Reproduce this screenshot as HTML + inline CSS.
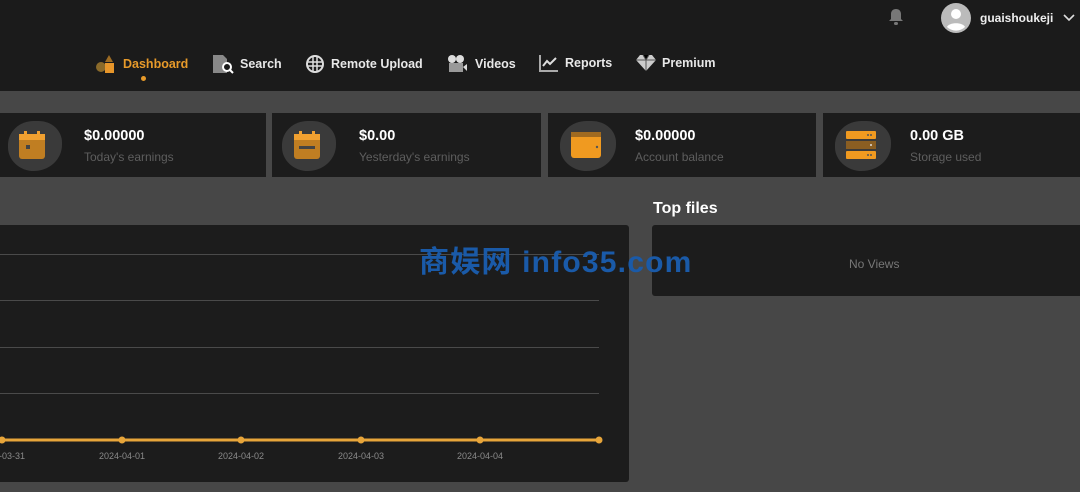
<!DOCTYPE html>
<html><head><meta charset="utf-8"><style>
*{margin:0;padding:0;box-sizing:border-box}
body{width:1080px;height:492px;overflow:hidden;background:#474747;font-family:"Liberation Sans","Noto Sans CJK SC",sans-serif;position:relative}
.hdr{position:absolute;left:0;top:0;width:1080px;height:91px;background:#1b1b1b}
.nav{position:absolute;top:54px;font-size:12.5px;font-weight:bold;color:#e8e8e8;display:flex;align-items:center;gap:6px}
.card{position:absolute;top:113px;height:64px;background:#1c1c1c}
.blob{position:absolute;left:8px;top:8px;width:54px;height:50px;background:#3a3a3a;border-radius:50% 45% 55% 50%}
.val{position:absolute;top:15px;color:#fff;font-weight:bold;font-size:14.5px}
.lbl{position:absolute;top:37px;color:#5e5e5e;font-size:12px}
.ic{position:absolute}
</style></head><body>
<div class="hdr"></div>
<svg class="ic" style="left:886px;top:7px" width="20" height="20" viewBox="0 0 20 20"><path d="M10 2c-3 0-5 2-5 5v5l-2 2h14l-2-2V7c0-3-2-5-5-5z" fill="#777"/><rect x="8" y="15" width="4" height="3" rx="1.5" fill="#777"/></svg>
<svg class="ic" style="left:941px;top:3px" width="30" height="30" viewBox="0 0 30 30"><circle cx="15" cy="15" r="15" fill="#bbb"/><circle cx="15" cy="11" r="5" fill="#fff"/><path d="M6 24c2-5 16-5 18 0a13 13 0 0 1-18 0z" fill="#fff"/></svg>
<div style="position:absolute;left:980px;top:11px;color:#eee;font-size:12px;font-weight:bold">guaishoukeji</div>
<svg class="ic" style="left:1063px;top:14px" width="12" height="8" viewBox="0 0 12 8"><path d="M1 1l5 5 5-5" stroke="#ddd" stroke-width="1.6" fill="none"/></svg>

<div class="nav" style="left:96px;color:#e79a2a"><svg width="21" height="20" viewBox="0 0 21 20"><circle cx="5" cy="13" r="5" fill="#8a6a2a"/><path d="M13 1l4 7h-8z" fill="#9c6b23"/><rect x="9" y="9" width="9" height="10" fill="#e7962a"/></svg>Dashboard</div>
<div style="position:absolute;left:141px;top:76px;width:5px;height:5px;border-radius:50%;background:#e79a2a"></div>
<div class="nav" style="left:212px"><svg width="22" height="20" viewBox="0 0 22 20"><path d="M1 1h10l4 4v14H1z" fill="#888"/><circle cx="15" cy="13" r="4" fill="#1b1b1b" stroke="#fff" stroke-width="2"/><path d="M18 16l3 3" stroke="#fff" stroke-width="2"/></svg>Search</div>
<div class="nav" style="left:305px"><svg width="20" height="20" viewBox="0 0 20 20"><circle cx="10" cy="10" r="8" fill="none" stroke="#ddd" stroke-width="2"/><path d="M2 8h16M2 12h16M8 2v16M12 2v16" stroke="#ddd" stroke-width="1.5"/></svg>Remote Upload</div>
<div class="nav" style="left:447px"><svg width="22" height="20" viewBox="0 0 22 20"><circle cx="5" cy="5" r="4" fill="#ddd"/><circle cx="13" cy="5" r="4" fill="#ddd"/><rect x="2" y="9" width="14" height="9" fill="#999"/><path d="M16 13l4-3v7z" fill="#ddd"/></svg>Videos</div>
<div class="nav" style="left:539px"><svg width="20" height="18" viewBox="0 0 20 18"><path d="M1 1v16h18" stroke="#aaa" stroke-width="2" fill="none"/><path d="M4 12l4-5 3 3 6-6" stroke="#ddd" stroke-width="2" fill="none"/></svg>Reports</div>
<div class="nav" style="left:636px"><svg width="20" height="18" viewBox="0 0 20 18"><path d="M4 1h12l4 5-10 11L0 6z" fill="#ccc"/><path d="M0 6h20M7 1l3 5 3-5M10 6v11" stroke="#555" stroke-width="1"/></svg>Premium</div>

<div class="card" style="left:0;width:266px"><div class="blob"></div>
<svg class="ic" style="left:18px;top:17px" width="28" height="30" viewBox="0 0 28 30"><rect x="1" y="4" width="26" height="25" rx="3" fill="#c07e22"/><rect x="1" y="4" width="26" height="6" fill="#f0a030"/><rect x="6" y="1" width="3" height="6" fill="#f0a030"/><rect x="19" y="1" width="3" height="6" fill="#f0a030"/><rect x="8" y="15" width="4" height="4" fill="#444"/></svg>
<div class="val" style="left:84px">$0.00000</div><div class="lbl" style="left:84px">Today's earnings</div></div>
<div class="card" style="left:272px;width:269px"><div class="blob" style="left:10px"></div>
<svg class="ic" style="left:21px;top:17px" width="28" height="30" viewBox="0 0 28 30"><rect x="1" y="4" width="26" height="25" rx="3" fill="#c07e22"/><rect x="1" y="4" width="26" height="6" fill="#f0a030"/><rect x="6" y="1" width="3" height="6" fill="#f0a030"/><rect x="19" y="1" width="3" height="6" fill="#f0a030"/><rect x="6" y="16" width="16" height="3" fill="#444"/></svg>
<div class="val" style="left:87px">$0.00</div><div class="lbl" style="left:87px">Yesterday's earnings</div></div>
<div class="card" style="left:548px;width:268px"><div class="blob" style="left:12px;width:56px"></div>
<svg class="ic" style="left:22px;top:18px" width="32" height="28" viewBox="0 0 32 28"><rect x="1" y="1" width="30" height="26" rx="3" fill="#f09a20"/><rect x="1" y="1" width="30" height="5" fill="#a06a20"/><circle cx="27" cy="16" r="1.2" fill="#555"/></svg>
<div class="val" style="left:87px">$0.00000</div><div class="lbl" style="left:87px">Account balance</div></div>
<div class="card" style="left:823px;width:257px"><div class="blob" style="left:12px;width:56px"></div>
<svg class="ic" style="left:22px;top:17px" width="32" height="30" viewBox="0 0 32 30"><rect x="1" y="1" width="30" height="8" rx="1" fill="#f09a20"/><rect x="1" y="11" width="30" height="8" fill="#8a5e22"/><rect x="1" y="21" width="30" height="8" rx="1" fill="#f09a20"/><circle cx="23" cy="5" r="1" fill="#555"/><circle cx="26" cy="5" r="1" fill="#555"/><circle cx="26" cy="15" r="1" fill="#ddd"/><circle cx="23" cy="25" r="1" fill="#555"/><circle cx="26" cy="25" r="1" fill="#555"/></svg>
<div class="val" style="left:87px">0.00 GB</div><div class="lbl" style="left:87px">Storage used</div></div>

<div style="position:absolute;left:0;top:225px;width:629px;height:257px;background:#1c1c1c;border-radius:0 3px 3px 0"></div>
<svg class="ic" style="left:0;top:225px" width="629" height="257">
<g stroke="#4a4a4a" stroke-width="1"><line x1="0" y1="29.5" x2="599" y2="29.5"/><line x1="0" y1="75.5" x2="599" y2="75.5"/><line x1="0" y1="122.5" x2="599" y2="122.5"/><line x1="0" y1="168.5" x2="599" y2="168.5"/></g>
<line x1="0" y1="215" x2="599" y2="215" stroke="#e7a53a" stroke-width="3"/>
<g fill="#e7a53a"><circle cx="2" cy="215" r="3.5"/><circle cx="122" cy="215" r="3.5"/><circle cx="241" cy="215" r="3.5"/><circle cx="361" cy="215" r="3.5"/><circle cx="480" cy="215" r="3.5"/><circle cx="599" cy="215" r="3.5"/></g>
<g fill="#8a8a8a" font-size="9" font-family="Liberation Sans" text-anchor="middle"><text x="2" y="234">2024-03-31</text><text x="122" y="234">2024-04-01</text><text x="241" y="234">2024-04-02</text><text x="361" y="234">2024-04-03</text><text x="480" y="234">2024-04-04</text></g>
</svg>
<div style="position:absolute;left:653px;top:200px;color:#fff;font-weight:bold;font-size:16px">Top files</div>
<div style="position:absolute;left:652px;top:225px;width:428px;height:71px;background:#1c1c1c;border-radius:3px 0 0 3px"></div>
<div style="position:absolute;left:849px;top:257px;color:#777;font-size:12px">No Views</div>
<div style="position:absolute;left:419px;top:237px;color:#1a5aa8;font-weight:bold;font-size:30px;letter-spacing:1.2px">商娱网 info35.com</div>
</body></html>
